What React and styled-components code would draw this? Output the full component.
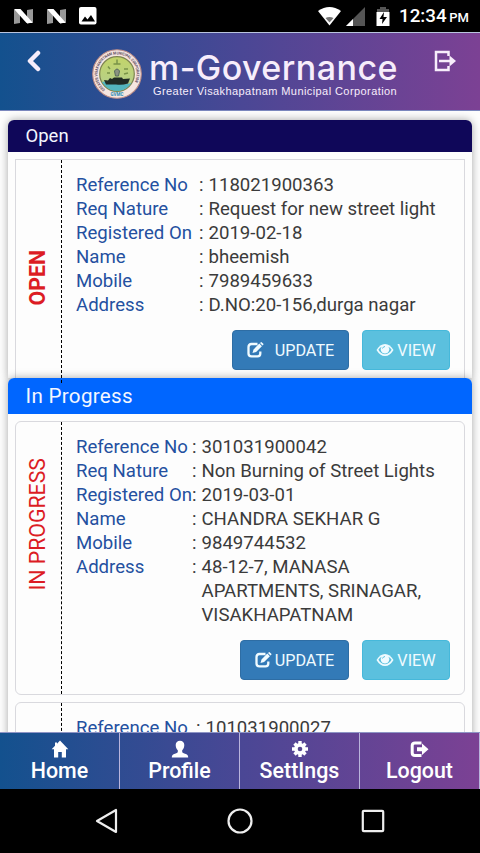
import styled, { createGlobalStyle } from "styled-components";

const requests = [
    {
        status: "OPEN",
        bold: true,
        square: true,
        labelWidth: 123,
        height: 225,
        statusTop: 90,
        wideButton: true,
        rows: [
            ["Reference No", "118021900363"],
            ["Req Nature", "Request for new street light"],
            ["Registered On", "2019-02-18"],
            ["Name", "bheemish"],
            ["Mobile", "7989459633"],
            ["Address", "D.NO:20-156,durga nagar"],
        ],
    },
    {
        status: "IN PROGRESS",
        labelWidth: 116,
        height: 274,
        statusTop: 36,
        rows: [
            ["Reference No", "301031900042"],
            ["Req Nature", "Non Burning of Street Lights"],
            ["Registered On", "2019-03-01"],
            ["Name", "CHANDRA SEKHAR G"],
            ["Mobile", "9849744532"],
            ["Address", "48-12-7, MANASA APARTMENTS, SRINAGAR, VISAKHAPATNAM"],
        ],
    },
    {
        status: "",
        labelWidth: 120,
        height: 274,
        rows: [["Reference No", "101031900027"]],
    },
];

const HomeIcon = () => (
    <svg width="18" height="18" viewBox="0 0 18 18" fill="currentColor">
        <path d="M9 .5 17.3 9.3H15V17.5H10.8V12H7.2V17.5H3V9.3H.7L4 5.8V2.5H6V3.7Z" />
    </svg>
);

const UserIcon = () => (
    <svg width="18" height="18" viewBox="0 0 18 18" fill="currentColor">
        <path d="M9 .8c2.600 0 4.300 1.800 4.300 4.300 0 2.200-.8 4-2.100 5.200v1.700c0 .8 1.400 1.200 3.600 2 1.700.6 2.400 1.500 2.400 3.500H.8c0-2 .7-2.900 2.400-3.500 2.200-.8 3.600-1.200 3.600-2v-1.700C5.500 9.100 4.700 7.300 4.700 5.100 4.700 2.600 6.400.8 9 .8Z" />
    </svg>
);

const CogIcon = () => (
    <svg width="18" height="18" viewBox="0 0 18 18">
        <g stroke="currentColor" strokeWidth="3.4">
            <path d="M9 1v16M1 9h16M3.500 3.500l11 11M14.500 3.500l-11 11" />
        </g>
        <circle cx="9" cy="9" r="5.9" fill="currentColor" />
        <circle cx="9" cy="9" r="2.3" fill="#57478f" />
    </svg>
);

const LogoutIcon = () => (
    <svg width="19" height="18" viewBox="0 0 19 18">
        <path d="M11.500 3H5Q2.200 3 2.200 5.500V13Q2.200 15.500 5 15.500H11.500" fill="none" stroke="currentColor" strokeWidth="3" />
        <path d="M7 7.200h5V3.500l6.500 5.700L12 15v-3.700H7Z" fill="currentColor" />
    </svg>
);

const EditIcon = () => (
    <svg width="17" height="16" viewBox="0 0 17 16">
        <path d="M10.500 2H4.500Q1.500 2 1.500 5V11.500Q1.500 14.400 4.500 14.400H10.500Q13.300 14.400 13.300 11.500V9.500" fill="none" stroke="currentColor" strokeWidth="2.3" />
        <path d="M5.500 11l1-3.600 5.800-5.800 2.600 2.600-5.800 5.800ZM13 .9l.9-.7q.5-.3 1 .2l1.400 1.400q.4.500 0 1l-.8.7Z" fill="currentColor" />
    </svg>
);

const EyeIcon = () => (
    <svg width="18" height="14" viewBox="0 0 18 14">
        <path d="M.5 7Q4 1 9 1t8.500 6Q14 13 9 13T.5 7Z" fill="currentColor" />
        <path d="M2.400 6.800Q3.600 4.700 5.600 3.700A4.200 4.200 0 0 0 9 10.500 4.200 4.200 0 0 0 12.400 3.700Q14.400 4.700 15.600 6.800 13 11.200 9 11.200T2.400 6.800Z" fill="#5bc0de" />
        <path d="M6.500 5.500Q7 3.700 9 3.500" fill="none" stroke="#5bc0de" />
    </svg>
);

const Emblem = () => (
    <svg width="50" height="50" viewBox="0 0 50 50">
        <defs>
            <linearGradient id="sky" x2="0" y2="1">
                <stop stopColor="#c3d469" />
                <stop offset="1" stopColor="#b2ce91" />
            </linearGradient>
            <clipPath id="disc"><circle cx="25" cy="25" r="17" /></clipPath>
            <path id="ring" d="M13.300 40.500A19.500 19.500 0 1 1 36.700 40.500" />
        </defs>
        <circle cx="25" cy="25" r="24.3" fill="#f5e5e0" stroke="#bd8d87" strokeWidth="1.1" />
        <circle cx="25" cy="25" r="17.3" fill="url(#sky)" stroke="#7e8450" strokeWidth="1.2" />
        <g clipPath="url(#disc)">
            <path d="M5 34q10-3 20 0t20-2v15H5Z" fill="#53b5bd" />
            <path d="M12 31l4 .5 2-2.500 2 1 2-1.500h8l1 1.500 7-.5-2 5q-6 2-12 1l-10 0Z" fill="#202b24" />
            <path d="M25 10.500v4M21.500 15h7M16 17.500l2 2.500M32 20h4M15 24h3M32 25l4-1" stroke="#799348" strokeWidth="1.5" />
            <path d="M22.500 22q2.500-4 5 0l-1 5h-3Z" fill="#8a9281" stroke="#586a5c" />
        </g>
        <text fontSize="4" fontWeight="bold" fill="#5e4c5f" fontFamily="Roboto, sans-serif">
            <textPath href="#ring" textLength="87" lengthAdjust="spacingAndGlyphs">GREATER VISAKHAPATNAM MUNICIPAL CORPORATION</textPath>
        </text>
        <text x="25" y="47" textAnchor="middle" fontSize="4.5" fontWeight="bold" fill="#2389b5" fontFamily="Roboto, sans-serif">GVMC</text>
    </svg>
);

const NotifyIcon = () => (
    <svg width="20" height="17" viewBox="0 0 20 17">
        <path d="M0 2l6-1v14l-6 1ZM13 2l6-1v13l-6 2Z" fill="#999" />
        <path d="M0 1h6.500l12.500 14h-6.500Z" fill="#fff" />
    </svg>
);

const App = () =>
{
    return (
        <>
            <GlobalStyle />
            <Screen>
                <StatusBar>
                    <StatusGroup $gap={12.5}>
                        <NotifyIcon />
                        <NotifyIcon />
                        <svg width="18" height="18" viewBox="0 0 18 18">
                            <rect width="17.5" height="17.5" rx="2" fill="#fff" />
                            <path d="M2.500 14.500l3.500-5 2.500 3 3.500-4.500 4 6.500Z" fill="#000" />
                        </svg>
                    </StatusGroup>
                    <StatusGroup $gap={5}>
                        <svg width="23" height="19" viewBox="0 0 23 19">
                            <path d="M0 4Q11.500-4 23 4L11.500 18.500Z" fill="#fff" />
                            <path d="M7.500 11q4-2 8 0l-4 4.500Z" fill="#777" />
                        </svg>
                        <svg width="19" height="19" viewBox="0 0 19 19">
                            <path d="M19 0v19H0Z" fill="#555" />
                            <path d="M7 12v7H0Z" fill="#fff" />
                        </svg>
                        <Battery width="14" height="19" viewBox="0 0 14 19">
                            <path d="M4 0h6v2h3v3H1V2h3Z" fill="#555" />
                            <path d="M.5 5h13v14H.5Z" fill="#fff" />
                            <path d="M8 5L3.500 12h3L6 17l5-7H7.500Z" fill="#000" />
                        </Battery>
                        <Clock>12:34 <small>PM</small></Clock>
                    </StatusGroup>
                </StatusBar>
                <Header>
                    <BackButton>
                        <svg width="15" height="22" viewBox="0 0 15 22">
                            <path d="M12 3L4 11l8 8" fill="none" stroke="currentColor" strokeWidth="4.5" strokeLinecap="round" strokeLinejoin="round" />
                        </svg>
                    </BackButton>
                    <Brand>
                        <Emblem />
                        <div>
                            <BrandName>m-Governance</BrandName>
                            <Corporation>Greater Visakhapatnam Municipal Corporation</Corporation>
                        </div>
                    </Brand>
                    <ExitButton>
                        <svg width="23" height="22" viewBox="0 0 23 22">
                            <path d="M14.500 6V2H2v18h12.500v-4M5 11h12" fill="none" stroke="currentColor" strokeWidth="2.5" />
                            <path d="M15.500 5.500L22 11l-6.500 5.500Z" fill="currentColor" />
                        </svg>
                    </ExitButton>
                </Header>
                <Content>
                    <Panel $height={258}>
                        <PanelTitle $open>Open</PanelTitle>
                        <RequestCard request={requests[0]} />
                    </Panel>
                    <Panel $height={700}>
                        <PanelTitle>In Progress</PanelTitle>
                        <RequestCard request={requests[1]} />
                        <RequestCard request={requests[2]} />
                    </Panel>
                </Content>
                <TabBar>
                    <Tab><HomeIcon />Home</Tab>
                    <Tab><UserIcon />Profile</Tab>
                    <Tab><CogIcon />SettIngs</Tab>
                    <Tab><LogoutIcon />Logout</Tab>
                </TabBar>
                <SystemBar>
                    <svg width="24" height="26" viewBox="0 0 24 26"><path d="M21 2v22L2 13Z" /></svg>
                    <svg width="26" height="26" viewBox="0 0 26 26"><circle cx="13" cy="13" r="11.5" /></svg>
                    <svg width="24" height="24" viewBox="0 0 24 24"><rect x="1.8" y="1.8" width="20.4" height="20.4" rx="1" /></svg>
                </SystemBar>
            </Screen>
        </>
    );
};

const RequestCard = ({ request }) =>
{
    return (
        <Card $height={request.height} $square={request.square}>
            <Side $top={request.statusTop}>
                <Status $bold={request.bold}>{request.status}</Status>
            </Side>
            <Details>
                {request.rows.map(([label, value]) => (
                    <Row key={label} $labelWidth={request.labelWidth}>
                        <Label>{label}</Label>
                        <span>:</span>
                        <span>{value}</span>
                    </Row>
                ))}
                <Buttons>
                    <Button $color="#337ab7" $border="#2e6da4" $width={request.wideButton ? 117 : 109}>
                        <EditIcon />
                        <ButtonText $space={request.wideButton ? 11 : 3}>UPDATE</ButtonText>
                    </Button>
                    <Button $color="#5bc0de" $border="#46b8da" $width={88}>
                        <EyeIcon />
                        <ButtonText $space={3}>VIEW</ButtonText>
                    </Button>
                </Buttons>
            </Details>
        </Card>
    );
};

const GlobalStyle = createGlobalStyle`
    * {
        box-sizing: border-box;
    }

    body {
        margin: 0;
        font-family: Roboto, sans-serif;
    }

    svg {
        display: block;
        flex: none;
    }
`

const Screen = styled.div`
    width: 480px;
    height: 853px;
    display: flex;
    flex-direction: column;
    overflow: hidden;
    background-color: #fdfdfd;
`

const StatusBar = styled.div`
    height: 32px;
    flex: none;
    display: flex;
    align-items: center;
    justify-content: space-between;
    padding: 0 11px 0 14px;
    background-color: black;
    color: white;
`

const StatusGroup = styled.div`
    display: flex;
    align-items: center;
    gap: ${(props) => props.$gap}px;
`

const Battery = styled.svg`
    margin-left: 6px;
`

const Clock = styled.span`
    margin-left: 4px;
    font-size: 18.8px;
    font-weight: 500;
    white-space: nowrap;

    small {
        font-size: 13px;
        margin-left: -2px;
    }
`

const Header = styled.header`
    height: 79px;
    flex: none;
    display: flex;
    align-items: flex-start;
    border-top: 1px solid #b9c4de;
    border-bottom: 1px solid #7b87bd;
    background: linear-gradient(90deg, #13518e, #4a4795 50%, #7c4194);
    background-origin: border-box;
    color: #f7edfb;
`

const BackButton = styled.div`
    width: 92px;
    padding: 17px 0 0 26px;
`

const ExitButton = styled.div`
    margin-left: 36px;
    padding-top: 17px;
`

const Brand = styled.div`
    display: flex;
    gap: 7px;
    padding-top: 16px;
    width: 306px;
`

const BrandName = styled.div`
    font-family: Inter, sans-serif;
    font-size: 34px;
    line-height: 36px;
    padding-top: 1px;
    font-weight: 500;
    letter-spacing: 0.45px;
    white-space: nowrap;
`

const Corporation = styled.div`
    padding-left: 4px;
    font-family: "Liberation Sans", sans-serif;
    font-size: 11px;
    line-height: 12px;
    letter-spacing: 0.42px;
    white-space: nowrap;
    margin-top: -1px;
`

const Content = styled.main`
    flex: 1;
    min-height: 0;
    padding: 9px 8px 0;
    overflow: hidden;
`

const Panel = styled.section`
    height: ${(props) => props.$height}px;
    border-radius: 6px 6px 0 0;
    background-color: #fdfdfd;
    box-shadow: 0 0 8px rgba(0, 0, 0, 0.35);
`

const PanelTitle = styled.h2`
    height: ${(props) => props.$open ? 32 : 36}px;
    margin: 0 0 7px;
    padding-left: 17.5px;
    border-radius: 6px 6px 0 0;
    background-color: ${(props) => props.$open ? "#0f0759" : "#0066ff"};
    color: #f4f7ff;
    font-size: ${(props) => props.$open ? 18.5 : 20.6}px;
    font-weight: 400;
    letter-spacing: ${(props) => props.$open ? 0 : 0.3}px;
    line-height: ${(props) => props.$open ? 32 : 36}px;
`

const Card = styled.article`
    display: flex;
    height: ${(props) => props.$height}px;
    margin: 0 7px 7px;
    border: 1px solid #d9d9de;
    border-radius: ${(props) => props.$square ? 0 : 6}px;
`

const Side = styled.div`
    width: 46px;
    flex: none;
    display: flex;
    align-items: flex-start;
    justify-content: center;
    padding-top: ${(props) => props.$top}px;
    padding-right: 2px;
    border-right: 1px dashed black;
`

const Status = styled.span`
    writing-mode: vertical-rl;
    transform: rotate(180deg);
    font-size: 21.3px;
    font-weight: ${(props) => props.$bold ? 700 : 400};
    color: #dc1c24;
`

const Details = styled.div`
    flex: 1;
    min-width: 0;
    padding: 13px 14px 0;
`

const Row = styled.div`
    display: grid;
    grid-template-columns: ${(props) => props.$labelWidth}px 9.5px minmax(0, 1fr);
    font-size: 18.6px;
    line-height: 24px;
    color: #3b3b3b;
    white-space: nowrap;

    span:last-child {
        white-space: normal;
    }
`

const Label = styled.span`
    color: #2450a0;
`

const Buttons = styled.div`
    display: flex;
    justify-content: flex-end;
    gap: 13px;
    margin-top: 13px;
`

const Button = styled.button`
    display: flex;
    align-items: center;
    justify-content: center;
    width: ${(props) => props.$width}px;
    height: 40px;
    padding: 0;
    border: 1px solid ${(props) => props.$border};
    border-radius: 4px;
    background-color: ${(props) => props.$color};
    color: #f0fbff;
    font-family: inherit;
    font-size: 16.2px;
`

const ButtonText = styled.span`
    margin-left: ${(props) => props.$space}px;
`

const TabBar = styled.nav`
    display: flex;
    flex: none;
    height: 57px;
    border-top: 1px solid #8d94c5;
    background: linear-gradient(90deg, #13518e, #4a4795 50%, #7c4194);
    color: white;
`

const Tab = styled.div`
    flex: 1;
    display: flex;
    flex-direction: column;
    align-items: center;
    padding-top: 7px;
    border-right: 1px solid #b9b4dc;
    font-size: 21.4px;
    line-height: 26px;
    font-weight: 500;
`

const SystemBar = styled.div`
    flex: none;
    display: flex;
    justify-content: center;
    align-items: center;
    gap: 108px;
    height: 64px;
    background-color: black;

    svg {
        fill: none;
        stroke: #eee;
        stroke-width: 2.2px;
        stroke-linejoin: round;
    }
`

export default App;
